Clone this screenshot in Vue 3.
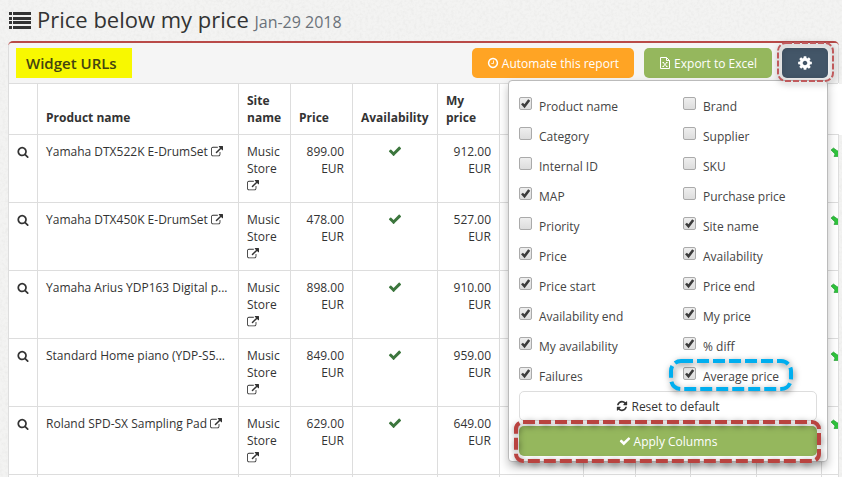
<script setup>
import { ref, h } from 'vue'

const paths = {
  link: 'M1408 928v320q0 119-84.5 203.5t-203.5 84.5h-832q-119 0-203.5-84.5t-84.5-203.5v-832q0-119 84.5-203.5t203.5-84.5h704q14 0 23 9t9 23v64q0 14-9 23t-23 9h-704q-66 0-113 47t-47 113v832q0 66 47 113t113 47h832q66 0 113-47t47-113v-320q0-14 9-23t23-9h64q14 0 23 9t9 23zm384-864v512q0 26-19 45t-45 19-45-19l-176-176-652 652q-10 10-23 10t-23-10l-114-114q-10-10-10-23t10-23l652-652-176-176q-19-19-19-45t19-45 45-19h512q26 0 45 19t19 45z',
  check: 'M1671 566q0 40-28 68l-724 724-136 136q-28 28-68 28t-68-28l-136-136-362-362q-28-28-28-68t28-68l136-136q28-28 68-28t68 28l294 295 656-657q28-28 68-28t68 28l136 136q28 28 28 68z',
  search: 'M1216 832q0-185-131.5-316.5t-316.5-131.5-316.5 131.5-131.5 316.5 131.5 316.5 316.5 131.5 316.5-131.5 131.5-316.5zm512 832q0 52-38 90t-90 38q-54 0-90-38l-343-342q-179 124-399 124-143 0-273.5-55.5t-225-150-150-225-55.5-273.5 55.5-273.5 150-225 225-150 273.5-55.5 273.5 55.5 225 150 150 225 55.5 273.5q0 220-124 399l343 343q37 37 37 90z',
  cog: 'M1152 896q0-106-75-181t-181-75-181 75-75 181 75 181 181 75 181-75 75-181zm512-109v222q0 12-8 23t-20 13l-185 28q-19 54-39 91 35 50 107 138 10 12 10 25t-9 23q-27 37-99 108t-94 71q-12 0-26-9l-138-108q-44 23-91 38-16 136-29 186-7 28-36 28h-222q-14 0-24.5-8.5t-11.5-21.5l-28-184q-49-16-90-37l-141 107q-10 9-25 9-14 0-25-11-126-114-165-168-7-10-7-23 0-12 8-23 15-21 51-66.5t54-70.5q-27-50-41-99l-183-27q-13-2-21-12.5t-8-23.5v-222q0-12 8-23t19-13l186-28q14-46 39-92-40-57-107-138-10-12-10-24 0-10 9-23 26-36 98.5-107.5t94.5-71.5q13 0 26 10l138 107q44-23 91-38 16-136 29-186 7-28 36-28h222q14 0 24.5 8.5t11.5 21.5l28 184q49 16 90 37l142-107q9-9 24-9 13 0 25 10 129 119 165 170 7 8 7 22 0 12-8 23-15 21-51 66.5t-54 70.5q26 50 41 98l183 28q13 2 21 12.5t8 23.5z',
  clock: 'M1024 544v448q0 14-9 23t-23 9h-320q-14 0-23-9t-9-23v-64q0-14 9-23t23-9h224v-352q0-14 9-23t23-9h64q14 0 23 9t9 23zm416 352q0-148-73-273t-198-198-273-73-273 73-198 198-73 273 73 273 198 198 273 73 273-73 198-198 73-273zm224 0q0 209-103 385.5t-279.5 279.5-385.5 103-385.5-103-279.5-279.5-103-385.5 103-385.5 279.5-279.5 385.5-103 385.5 103 279.5 279.5 103 385.5z',
  refresh: 'M1639 1056q0 5-1 7-64 268-268 434.5t-478 166.5q-146 0-282.5-55t-243.5-157l-129 129q-19 19-45 19t-45-19-19-45v-448q0-26 19-45t45-19h448q26 0 45 19t19 45-19 45l-137 137q71 66 161 102t187 36q134 0 250-65t186-179q11-17 53-117 8-23 30-23h192q13 0 22.5 9.5t9.5 22.5zm25-800v448q0 26-19 45t-45 19h-448q-26 0-45-19t-19-45 19-45l138-138q-148-137-349-137-134 0-250 65t-186 179q-11 17-53 117-8 23-30 23h-199q-13 0-22.5-9.5t-9.5-22.5v-7q65-268 270-434.5t480-166.5q146 0 284 55.5t245 156.5l130-129q19-19 45-19t45 19 19 45z',
}

const Icon = (props) =>
  h('svg', { viewBox: '0 0 1792 1792', fill: 'currentColor', 'aria-hidden': 'true' }, [h('path', { d: paths[props.name] })])
Icon.props = ['name']

const rows = [
  { name: 'Yamaha DTX522K E-DrumSet', link: true, price: '899.00', mine: '912.00' },
  { name: 'Yamaha DTX450K E-DrumSet', link: true, price: '478.00', mine: '527.00' },
  { name: 'Yamaha Arius YDP163 Digital p...', link: false, price: '898.00', mine: '910.00' },
  { name: 'Standard Home piano (YDP-S5...', link: false, price: '849.00', mine: '959.00' },
  { name: 'Roland SPD-SX Sampling Pad', link: true, price: '629.00', mine: '649.00' },
  { name: '', link: false, price: '', mine: '' },
]

const options = ref([
  ['Product name', true], ['Brand', false],
  ['Category', false], ['Supplier', false],
  ['Internal ID', false], ['SKU', false],
  ['MAP', true], ['Purchase price', false],
  ['Priority', false], ['Site name', true],
  ['Price', true], ['Availability', true],
  ['Price start', true], ['Price end', true],
  ['Availability end', true], ['My price', true],
  ['My availability', true], ['% diff', true],
  ['Failures', true], ['Average price', true],
].map(([label, on], id) => ({ id: 'col-' + id, label, on })))
</script>

<template>
  <div class="page">
    <svg class="paper" aria-hidden="true">
      <filter id="grain">
        <feTurbulence type="fractalNoise" baseFrequency="0.35" numOctaves="3" seed="4" />
        <feColorMatrix values="0 0 0 0 0.4  0 0 0 0 0.4  0 0 0 0 0.38  0.2 0 0 0 -0.08" />
      </filter>
      <rect width="100%" height="100%" filter="url(#grain)" />
    </svg>
    <header class="title">
      <svg class="list" viewBox="0 0 22 18" fill="currentColor" aria-hidden="true">
        <path d="M0 0h3v3H0zM4 0h18v3H4zM0 5h3v3H0zM4 5h18v3H4zM0 9h3v3H0zM4 9h18v3H4zM0 14h3v3H0zM4 14h18v3H4z" />
      </svg>
      <h1>Price below my price <small>Jan-29 2018</small></h1>
    </header>

    <section class="panel">
      <div class="bar">
        <h2>Widget URLs</h2>
        <div class="actions">
          <button type="button" class="btn orange"><Icon name="clock" class="i" />Automate this report</button>
          <button type="button" class="btn green">
            <svg class="i" viewBox="0 0 12 12" fill="none" stroke="currentColor" aria-hidden="true">
              <path d="M1.5.5h6l3 3v8h-9zM7.500 .5v3h3M3.500 5.500h1.500M7 5.500h1.500M4.200 5.500l3.600 4M7.800 5.500l-3.600 4M3.500 9.500h1.500M7 9.500h1.500" />
            </svg>Export to Excel
          </button>
          <div class="settings">
            <button type="button" class="btn slate" aria-label="Columns"><Icon name="cog" class="gear" /></button>
            <svg class="mark mark-gear" aria-hidden="true"><rect rx="8" /></svg>
            <form class="menu" @submit.prevent>
              <div class="options">
                <div v-for="o in options" :key="o.id" class="option">
                  <span class="box">
                    <input :id="o.id" v-model="o.on" type="checkbox">
                    <svg v-if="o.on" viewBox="0 0 13 13" fill="none" stroke="#3c3c3c" stroke-width="2.600" aria-hidden="true"><path d="M3 6.500l2.500 2.800L10.200 3" /></svg>
                  </span>
                  <label :for="o.id">{{ o.label }}</label>
                  <svg v-if="o.label === 'Average price'" class="mark mark-blue" aria-hidden="true"><rect rx="10" /></svg>
                </div>
              </div>
              <button type="button" class="btn plain"><Icon name="refresh" class="i" />Reset to default</button>
              <div class="apply">
                <button type="submit" class="btn green"><Icon name="check" class="i" />Apply Columns</button>
                <svg class="mark mark-red" aria-hidden="true"><rect rx="7" /></svg>
              </div>
            </form>
          </div>
        </div>
      </div>

      <table>
        <colgroup>
          <col class="w29"><col><col class="w52"><col class="w62"><col class="w85"><col class="w62">
          <col class="w84"><col class="w52"><col class="w55"><col class="w66"><col class="w65"><col class="w17">
        </colgroup>
        <thead>
          <tr>
            <th></th><th>Product name</th><th>Site name</th><th>Price</th><th>Availability</th><th>My price</th>
            <th v-for="n in 6" :key="n"></th>
          </tr>
        </thead>
        <tbody>
          <tr v-for="(r, i) in rows" :key="i">
            <template v-if="r.name">
              <td class="look"><Icon name="search" class="i" /></td>
              <td class="name">{{ r.name }} <Icon v-if="r.link" name="link" class="i ext" /></td>
              <td>Music Store <Icon name="link" class="i ext" /></td>
              <td class="num">{{ r.price }} EUR</td>
              <td class="yes"><Icon name="check" class="tick" /></td>
              <td class="num">{{ r.mine }} EUR</td>
              <td v-for="n in 5" :key="n"></td>
              <td class="trend">
                <svg viewBox="0 0 12 12" aria-hidden="true"><path d="M1 3l2.500-2L7.500 4 9.500 2v7.500H4L5 7z" fill="#2fc43c" stroke="#1f9a2e" stroke-width=".6" stroke-linejoin="round" /></svg>
              </td>
            </template>
            <template v-else><td v-for="n in 12" :key="n"></td></template>
          </tr>
        </tbody>
      </table>
    </section>
  </div>
</template>

<style>
body { background: #f3f3f2; overflow: hidden; }
</style>

<style scoped>
* { box-sizing: border-box; }
.page {
  position: relative;
  height: 100vh;
  padding: 0 3px 0 8px;
  overflow: hidden;
  font: 12px/17px "Open Sans", "Noto Sans", sans-serif;
  color: #333;
}
.paper { position: absolute; inset: 0; width: 100%; height: 100%; }
.title { position: relative; display: flex; align-items: center; height: 41px; gap: 6px; padding-left: 1px; color: #333; }
.list { width: 22px; height: 18px; }
h1 { margin: 0; font-size: 22px; line-height: 30px; font-weight: 400; }
small { font-size: 16px; color: #6b727a; }
.panel { position: relative; border-top: 2px solid #b94a48; border-radius: 5px 5px 0 0; background: #fff; }
.bar {
  display: flex;
  align-items: center;
  justify-content: space-between;
  height: 40px;
  padding: 0 10px 0 7px;
  background: #f5f5f5;
  border: solid #ddd;
  border-width: 0 1px;
  border-radius: 4px 4px 0 0;
}
h2 { margin: 0; padding: 0 15px 0 10px; background: #f8f800; color: #444410; font-size: 15px; line-height: 30px; font-weight: 600; }
.actions { display: flex; gap: 10px; }
.btn {
  display: flex;
  align-items: center;
  justify-content: center;
  height: 30px;
  padding: 0 15px;
  border: 0;
  border-radius: 5px;
  color: #fff;
  font: 500 12px/17px "Open Sans", "Noto Sans", sans-serif;
  gap: 3px;
}
.orange { background: #ffa424; }
.green { background: #95b75d; }
.slate { width: 46px; background: #435668; }
.plain { width: 100%; background: #fff; border: 1px solid #ddd; color: #333; font-weight: 400; }
.i { width: 12px; height: 12px; }
.gear { width: 16px; height: 16px; flex: none; }
.settings { position: relative; }
.menu {
  position: absolute;
  z-index: 2;
  top: 32px;
  right: 0;
  width: 320px;
  padding: 10px 10px 5px;
  background: #fff;
  border: 1px solid #bbb;
  border-radius: 4px;
  box-shadow: 0 5px 10px rgba(0, 0, 0, .25);
}
.options { display: grid; grid-template-columns: 164px 1fr; }
.option { position: relative; display: flex; gap: 7px; height: 30px; color: #444; }
.option label { padding-top: 7px; }
.box { display: grid; width: 13px; height: 13px; margin-top: 6px; }
.box > * { grid-area: 1 / 1; width: 13px; height: 13px; margin: 0; pointer-events: none; }
.box input { appearance: none; pointer-events: auto; border: 1px solid #aaa; border-radius: 2px; background: linear-gradient(#eee, #ddd); }
.apply { position: relative; margin-top: 5px; }
.apply .btn { width: 100%; }
.mark { position: absolute; overflow: visible; pointer-events: none; filter: drop-shadow(1px 2px 3px rgba(0, 0, 0, .5)); }
.mark rect { width: 100%; height: 100%; fill: none; stroke-width: 4px; stroke-dasharray: 12 4; }
.mark-gear { z-index: 3; left: -4px; top: -5px; width: 55px; height: 38px; }
.mark-gear rect { stroke: #c05a5c; stroke-width: 2px; stroke-dasharray: 6 2; }
.mark-blue { left: -12px; top: 0; width: 120px; height: 28px; }
.mark-blue rect { stroke: #00aeef; }
.mark-red { left: -3px; top: -4px; width: calc(100% + 5px); height: 39px; }
.mark-red rect { stroke: #b94340; }
table { width: 100%; table-layout: fixed; border-collapse: collapse; background: #fff; }
th, td { padding: 8px; border: 1px solid #ddd; vertical-align: top; text-align: left; }
th { height: 51px; vertical-align: bottom; font-weight: 700; }
thead th:nth-last-child(-n+6) { border-left-color: #fff; border-right-color: #fff; }
thead th:nth-child(7) { border-left-color: #ddd; }
thead th:last-child { box-shadow: 5px 0 #fff; }
td { height: 68px; }
.w29 { width: 29px; } .w52 { width: 52px; } .w55 { width: 55px; } .w62 { width: 62px; } .w65 { width: 65px; }
.w66 { width: 66px; } .w84 { width: 84px; } .w85 { width: 85px; } .w17 { width: 17px; }
.name { white-space: nowrap; }
.look .i, .ext { vertical-align: -2px; }
.num { text-align: right; }
.yes { text-align: center; color: #3c763d; }
.tick { width: 14px; height: 14px; vertical-align: -2px; }
.trend { overflow: hidden; white-space: nowrap; }
.trend svg { width: 12px; height: 12px; vertical-align: -3px; }
</style>
